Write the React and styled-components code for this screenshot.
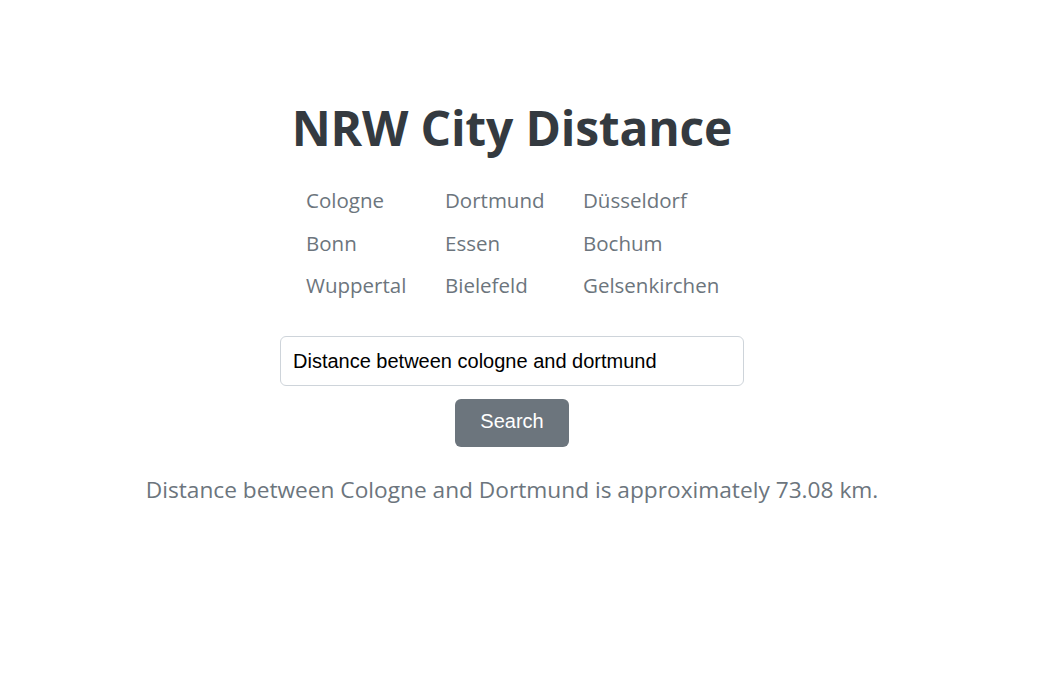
import React from "react";
import styled, { createGlobalStyle } from "styled-components";

const Global = createGlobalStyle`
  html, body { margin: 0; padding: 0; background: #fff; }
  body { font-family: "Open Sans", "Noto Sans", sans-serif; }
`;

const Page = styled.main`
  width: 1024px;
  display: flex;
  flex-direction: column;
  align-items: center;
  padding-top: 96px;
`;

const Title = styled.h1`
  margin: 0;
  font-size: 48px;
  line-height: 64px;
  font-weight: 700;
  color: #343a40;
  letter-spacing: -0.2px;
`;

const CityGrid = styled.ul`
  list-style: none;
  margin: 25px 0 0;
  padding: 0 0 0 2px;
  display: grid;
  grid-template-columns: 139px 138px 137px;
  row-gap: 12.5px;
`;

const City = styled.li`
  font-size: 20.5px;
  line-height: 30px;
  color: #6c757d;
`;

const Form = styled.form`
  display: flex;
  flex-direction: column;
  align-items: center;
  gap: 13px;
  margin-top: 36px;
`;

const Input = styled.input`
  box-sizing: border-box;
  width: 464px;
  height: 50px;
  padding: 0 12px;
  border: 1px solid #ced4da;
  border-radius: 6px;
  font-family: "Liberation Sans", Arial, sans-serif;
  font-size: 20px;
  color: #000;
  outline: none;
`;

const Button = styled.button`
  box-sizing: border-box;
  width: 114px;
  height: 48px;
  padding: 0 0 3px;
  border: none;
  border-radius: 6px;
  background: #6c757d;
  color: #fff;
  font-family: "Liberation Sans", Arial, sans-serif;
  font-size: 20px;
  cursor: pointer;
`;

const Result = styled.p`
  margin: 26px 0 0;
  font-size: 22.7px;
  line-height: 34px;
  color: #6c757d;
`;

const cities = [
  "Cologne", "Dortmund", "Düsseldorf",
  "Bonn", "Essen", "Bochum",
  "Wuppertal", "Bielefeld", "Gelsenkirchen",
];

export default function App() {
  return (
    <>
      <Global />
      <Page>
        <Title>NRW City Distance</Title>
        <CityGrid>
          {cities.map((c) => (
            <City key={c}>{c}</City>
          ))}
        </CityGrid>
        <Form onSubmit={(e) => e.preventDefault()}>
          <Input defaultValue="Distance between cologne and dortmund" />
          <Button type="submit">Search</Button>
        </Form>
        <Result>Distance between Cologne and Dortmund is approximately 73.08 km.</Result>
      </Page>
    </>
  );
}
